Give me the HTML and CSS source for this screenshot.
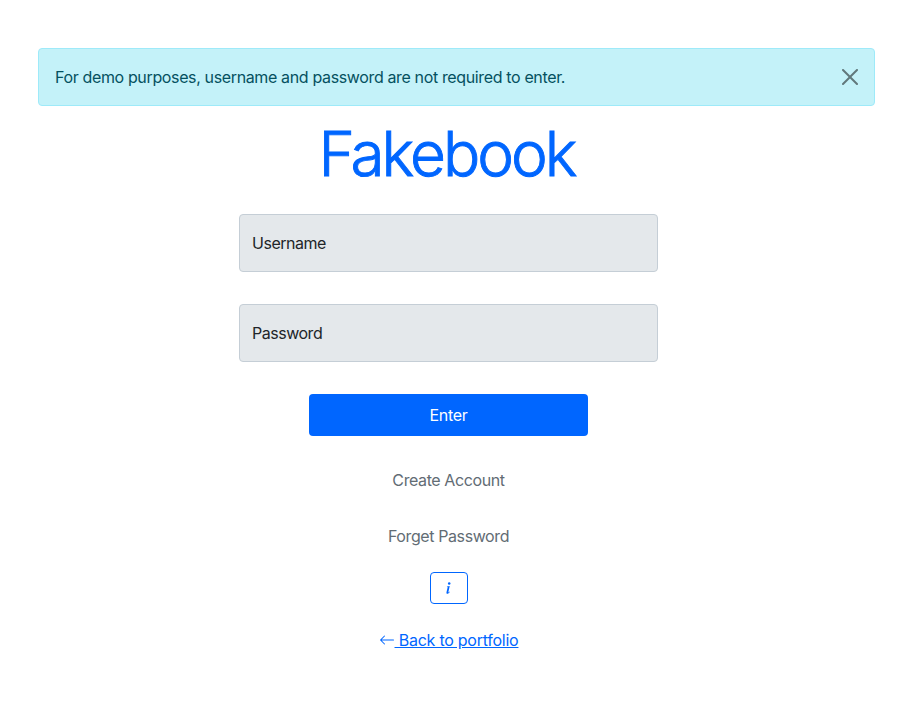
FILE: index.html
```html
<!DOCTYPE html>
<html lang="en">
<head>
<meta charset="utf-8">
<title>Fakebook</title>
<link rel="stylesheet" href="styles.css">
</head>
<body>
<div class="alert" role="alert">
  <span class="alert-text">For demo purposes, username and password are not required to enter.</span>
  <button class="close" aria-label="Close"><svg viewBox="0 0 16 16" width="16" height="16"><path d="M.293.293a1 1 0 0 1 1.414 0L8 6.586 14.293.293a1 1 0 1 1 1.414 1.414L9.414 8l6.293 6.293a1 1 0 0 1-1.414 1.414L8 9.414l-6.293 6.293a1 1 0 0 1-1.414-1.414L6.586 8 .293 1.707a1 1 0 0 1 0-1.414z"/></svg></button>
</div>
<main class="login">
  <h1 class="brand">Fakebook</h1>
  <div class="field">Username</div>
  <div class="field">Password</div>
  <button class="enter">Enter</button>
  <a class="link">Create Account</a>
  <a class="link">Forget Password</a>
  <button class="info" aria-label="Info"><svg viewBox="0 0 16 16" width="16" height="16"><path d="M5.900 6.400 8.700 6 7.400 12C7.300 12.600 7.700 12.600 8.600 11.500L8.900 11.800C8 13.300 7.200 13.800 6.300 13.800 5.500 13.800 5.300 13.100 5.500 12.300L6.600 7.500C6.700 7 6.500 6.800 5.900 6.800Z"/><circle cx="8.200" cy="3.500" r="1.250"/></svg></button>
  <a class="back" href="#"><svg viewBox="0 0 16 16" width="16" height="16"><path fill-rule="evenodd" d="M15 8a.5.5 0 0 0-.5-.5H2.707l3.147-3.146a.5.5 0 1 0-.708-.708l-4 4a.5.5 0 0 0 0 .708l4 4a.5.5 0 0 0 .708-.708L2.707 8.500H14.5A.5.5 0 0 0 15 8"/></svg><span>&nbsp;Back to portfolio</span></a>
</main>
</body>
</html>
```
FILE: styles.css
```css
* { box-sizing: border-box; }
body { margin: 0; padding: 48px 40px 0 38px; background: #fff; color: #212529; font: 16px/24px Inter, "Liberation Sans", sans-serif; letter-spacing: -0.36px; }
svg { display: block; fill: currentColor; }
button { font: inherit; letter-spacing: inherit; padding: 0; }
.alert { display: flex; align-items: center; justify-content: space-between; height: 58px; padding: 0 16px; border: 1px solid #9eeaf9; border-radius: 4px; background: #c4f2f9; color: #055160; }
.close { border: 0; background: none; opacity: .5; color: #000; }
.login { display: flex; flex-direction: column; align-items: center; width: 419px; margin-left: 201px; }
.brand { margin: 9px 4px 21px 0; font-size: 62px; line-height: 78px; font-weight: 300; letter-spacing: -3px; -webkit-text-stroke: 0.9px #0066ff; color: #0066ff; }
.field { display: flex; align-items: center; width: 419px; height: 58px; margin-bottom: 32px; padding: 0 12px; border: 1px solid #c5ced6; border-radius: 4px; background: #e4e8eb; letter-spacing: -0.48px; }
.enter { width: 279px; height: 42px; border: 0; border-radius: 4px; background: #0066ff; color: #fff; letter-spacing: -0.25px; }
.link { margin-top: 32px; color: #626c74; letter-spacing: -0.4px; }
.info { display: flex; align-items: center; justify-content: center; width: 38px; height: 32px; margin: 24px 0; border: 1px solid #0066ff; border-radius: 4px; background: #fff; color: #0066ff; }
.back { display: flex; align-items: center; color: #0066ff; letter-spacing: -0.25px; }
```
